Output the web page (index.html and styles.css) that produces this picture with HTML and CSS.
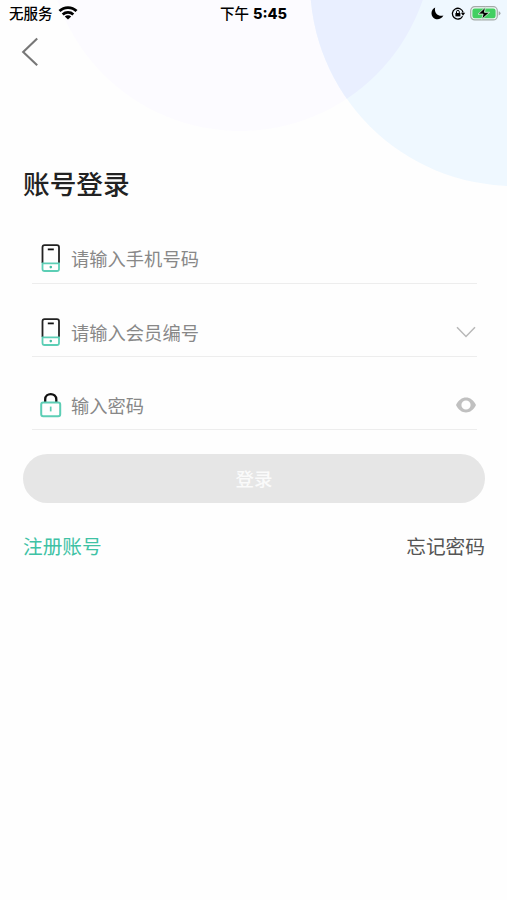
FILE: index.html
```html
<!DOCTYPE html>
<html lang="zh-CN">
<head>
<meta charset="utf-8">
<title>账号登录</title>
<link rel="stylesheet" href="styles.css">
</head>
<body>
<svg class="backdrop" width="507" height="190" viewBox="0 0 507 190" aria-hidden="true">
  <defs><clipPath id="left-circle"><circle cx="240" cy="-62" r="193"/></clipPath></defs>
  <circle cx="240" cy="-62" r="193" fill="#fcfbff"/>
  <circle cx="514" cy="-18" r="204" fill="#eff8ff"/>
  <circle cx="514" cy="-18" r="204" fill="#e9efff" clip-path="url(#left-circle)"/>
</svg>
<div class="screen">
  <header class="status">
    <div class="status-left">
      <span>无服务</span>
      <svg width="20" height="14" viewBox="0 0 20 14" fill="none" stroke="#000" stroke-width="2.8">
        <path d="M1.5 5.1C6.2.4 13.8.4 18.5 5.1"/>
        <path d="M4.7 8.4c3-2.8 7.6-2.8 10.6 0"/>
        <path d="M10 13.6 6.8 10.6c1.8-1.7 4.6-1.7 6.4 0z" fill="#000" stroke="none"/>
      </svg>
    </div>
    <div class="status-time">下午 <b>5:45</b></div>
    <div class="status-right">
      <svg width="13" height="13" viewBox="0 0 13 13"><path d="M4.2.5C2.9 5.6 6.6 10 12.4 8.6 9.9 13.1 4.3 13.5 1.7 9.9-.7 6.5.6 2.1 4.2.5z"/></svg>
      <svg class="rotation" width="15" height="13" viewBox="0 0 15 13" fill="none" stroke="#000" stroke-width="1.3">
        <path d="M11.6 9.2A5.4 5.4 0 1 1 12.1 5.5"/>
        <path d="M9.9 5.8h4.3L12 8.8z" fill="#000" stroke="none"/>
        <path d="M4.4 6h5v3.4h-5z" fill="#000" stroke="none"/>
        <path d="M5.5 6V4.8a1.4 1.4 0 0 1 2.8 0V6" stroke-width="1"/>
      </svg>
      <svg width="31" height="15" viewBox="0 0 31 15">
        <rect x=".7" y=".7" width="26.6" height="13.2" rx="4" fill="#eef8f5" stroke="#a4aaa8" stroke-width="1.2"/>
        <rect x="2.4" y="2.4" width="23.2" height="9.8" rx="2.3" fill="#43cf62"/>
        <path d="M28.7 5.2q1.8.6 1.8 2.1t-1.8 2.1z" fill="#a4aaa8"/>
        <path d="M15.4 1.2 8.1 8.1h5L11.7 13.4l7.9-7.1h-5.1z" fill="#000" stroke="#d7f5dd" stroke-width=".9"/>
      </svg>
    </div>
  </header>
  <nav class="nav">
    <svg width="18" height="30" viewBox="0 0 18 30" fill="none" stroke="#777" stroke-width="2.1"><path d="M16.2 1.6 2.2 15 16.2 28.2"/></svg>
  </nav>
  <main class="content">
    <h1 class="title">账号登录</h1>
    <form class="form">
      <div class="field">
        <svg class="field-icon" width="22" height="28" viewBox="0 0 22 28" fill="none" stroke-width="1.8">
          <path d="M2.5 19V3.3Q2.5 1.2 4.6 1.2h12.3Q19 1.2 19 3.3V19" stroke="#222"/>
          <path d="M7.8 5.4h6" stroke="#111"/>
          <path d="M2.5 19.3H19v5.6q0 2.1-2.1 2.1H4.6q-2.1 0-2.1-2.1z" stroke="#5cceb5"/>
          <circle cx="10.8" cy="23.1" r="1.3" fill="#45bea4"/>
        </svg>
        <span class="placeholder">请输入手机号码</span>
      </div>
      <div class="field">
        <svg class="field-icon" width="22" height="28" viewBox="0 0 22 28" fill="none" stroke-width="1.8">
          <path d="M2.5 19V3.3Q2.5 1.2 4.6 1.2h12.3Q19 1.2 19 3.3V19" stroke="#222"/>
          <path d="M7.8 5.4h6" stroke="#111"/>
          <path d="M2.5 19.3H19v5.6q0 2.1-2.1 2.1H4.6q-2.1 0-2.1-2.1z" stroke="#5cceb5"/>
          <circle cx="10.8" cy="23.1" r="1.3" fill="#45bea4"/>
        </svg>
        <span class="placeholder">请输入会员编号</span>
        <svg class="field-action" width="20" height="12" viewBox="0 0 20 12" fill="none" stroke="#b8b8b8" stroke-width="1.5"><path d="M1 1.2 10 10.4 19 1.2"/></svg>
      </div>
      <div class="field">
        <svg class="field-icon" width="22" height="28" viewBox="0 0 22 28" fill="none">
          <path d="M5.2 11.5V8.3C5.2 1.3 16.3 1.3 16.3 8.3v3.2" stroke="#111" stroke-width="2.3"/>
          <rect x="1.2" y="11.4" width="19" height="13.8" rx="2" stroke="#5cceb5" stroke-width="2"/>
          <path d="M10.7 15.6v4.8" stroke="#5cceb5" stroke-width="1.7"/>
        </svg>
        <span class="placeholder">输入密码</span>
        <svg class="field-action" width="20" height="16" viewBox="0 0 20 16"><path fill="#c0c0c0" fill-rule="evenodd" d="M0 8C2.3 3 6 .4 10 .4S17.7 3 20 8c-2.3 5-6 7.4-10 7.4S2.3 13 0 8zM10 3.4a4.6 4.6 0 1 0 0 9.2 4.6 4.6 0 0 0 0-9.2z"/></svg>
      </div>
      <button class="submit" type="button">登录</button>
    </form>
    <div class="links"><a class="register">注册账号</a><a class="forgot">忘记密码</a></div>
  </main>
</div>
</body>
</html>
```

FILE: styles.css
```css
* { box-sizing: border-box; }
body {
  margin: 0;
  background: #fefefe;
  font-family: "Liberation Sans", "Noto Sans CJK SC", sans-serif;
}
svg { display: block; flex: none; }
.backdrop { position: absolute; top: 0; left: 0; }
.screen { position: relative; width: 507px; height: 900px; overflow: hidden; }
.status {
  display: grid;
  grid-template-columns: 1fr auto 1fr;
  height: 27px;
  padding: 0 6px 0 9px;
  align-items: center;
  font: 500 14.5px/26px Inter, "Noto Sans CJK SC", sans-serif;
  color: #000;
}
.status-left { display: flex; align-items: center; gap: 6px; }
.status-left svg { margin: -2px 0 0 -1px; }
.status-time { margin: 0 2px 0 -1px; white-space: nowrap; }
.status-time b { font-weight: 800; }
.status-right { display: flex; align-items: center; justify-content: flex-end; }
.rotation { margin: 0 4px 0 7px; }
.nav { height: 40px; padding: 10px 0 0 21px; }
.content { padding: 92px 22px 0 23px; }
.title {
  margin: 0;
  font: 500 26.7px/48px "Noto Sans CJK SC", sans-serif;
  color: #222;
}
.form { padding-top: 25px; }
.field {
  display: flex;
  align-items: center;
  height: 73px;
  margin: 0 8px 0 9px;
  padding: 23px 1px 0 8px;
  border-bottom: 1px solid #ededed;
}
.field:first-child { height: 52px; padding-top: 0; }
.field-icon { margin-right: 9px; }
.placeholder {
  flex: 1;
  font: 400 18.3px/28px "Noto Sans CJK SC", sans-serif;
  color: #888;
}
.submit {
  display: block;
  width: 100%;
  height: 49px;
  margin-top: 24px;
  padding: 0;
  border: 0;
  border-radius: 25px;
  background: #e6e6e6;
  color: #fafafa;
  font: 500 18.5px/49px "Noto Sans CJK SC", sans-serif;
}
.links {
  display: flex;
  justify-content: space-between;
  padding-top: 28px;
  font: 400 19.7px/30px "Noto Sans CJK SC", sans-serif;
}
.register { color: #3fc2a5; }
.forgot { color: #555; }
```
